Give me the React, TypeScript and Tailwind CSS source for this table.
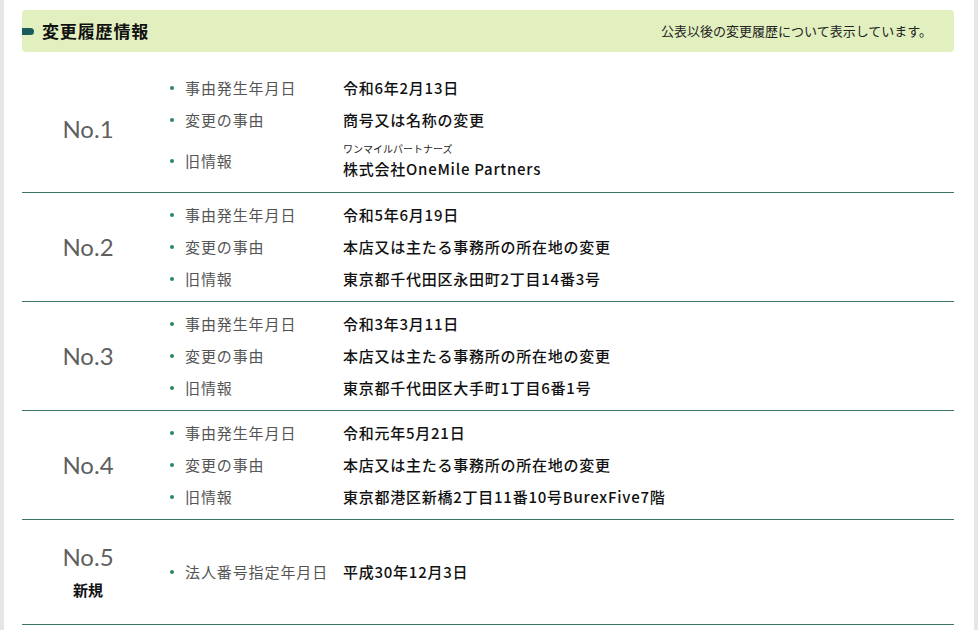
import React from "react";

type Item = {
  label: string;
  value: string;
  kana?: string;
};

type History = {
  no: number;
  isNew?: boolean;
  items: Item[];
};

const histories: History[] = [
  {
    no: 1,
    items: [
      { label: "事由発生年月日", value: "令和6年2月13日" },
      { label: "変更の事由", value: "商号又は名称の変更" },
      { label: "旧情報", value: "株式会社OneMile Partners", kana: "ワンマイルパートナーズ" },
    ],
  },
  {
    no: 2,
    items: [
      { label: "事由発生年月日", value: "令和5年6月19日" },
      { label: "変更の事由", value: "本店又は主たる事務所の所在地の変更" },
      { label: "旧情報", value: "東京都千代田区永田町2丁目14番3号" },
    ],
  },
  {
    no: 3,
    items: [
      { label: "事由発生年月日", value: "令和3年3月11日" },
      { label: "変更の事由", value: "本店又は主たる事務所の所在地の変更" },
      { label: "旧情報", value: "東京都千代田区大手町1丁目6番1号" },
    ],
  },
  {
    no: 4,
    items: [
      { label: "事由発生年月日", value: "令和元年5月21日" },
      { label: "変更の事由", value: "本店又は主たる事務所の所在地の変更" },
      { label: "旧情報", value: "東京都港区新橋2丁目11番10号BurexFive7階" },
    ],
  },
  {
    no: 5,
    isNew: true,
    items: [{ label: "法人番号指定年月日", value: "平成30年12月3日" }],
  },
];

const InfoRow = ({ item }: { item: Item }) => (
  <div className="flex items-center">
    <span className="w-[15px] flex items-center">
      <span className="block w-[4px] h-[4px] rounded-full bg-[#2a8a5c]" />
    </span>
    <span className="w-[158px] text-[15px] tracking-[0.06em] text-[#555]">{item.label}</span>
    {item.kana ? (
      <div className="pt-[4px] pb-[6px]">
        <div className="text-[10px] leading-[18px] text-[#222]">{item.kana}</div>
        <div className="text-[15px] leading-[22px] tracking-[0.05em] font-medium text-[#111]">
          {item.value}
        </div>
      </div>
    ) : (
      <span className="text-[15px] leading-[32px] tracking-[0.05em] font-medium text-[#111]">
        {item.value}
      </span>
    )}
  </div>
);

const HistoryBlock = ({ history }: { history: History }) => (
  <div
    className={`flex items-center border-b border-[#3a7565] ${
      history.isNew ? "h-[105px]" : "py-[6px]"
    }`}
  >
    <div className="w-[132px] flex flex-col items-center">
      <span className="text-[24px] leading-[30px] text-[#5f5f5f] font-['Lato','Noto_Sans',sans-serif]">
        No.{history.no}
      </span>
      {history.isNew && (
        <span className="mt-[7px] text-[15px] font-bold text-[#111]">新規</span>
      )}
    </div>
    <div className="pl-[16px] flex flex-col leading-[32px]">
      {history.items.map((item) => (
        <InfoRow key={item.label} item={item} />
      ))}
    </div>
  </div>
);

export default function App() {
  return (
    <div className="flex h-[630px] bg-white font-['Noto_Sans_CJK_JP',sans-serif] overflow-hidden">
      <div className="w-[4px] bg-[#e6e6e6]" />
      <main className="flex-1 pl-[18px] pr-[20px] pt-[10px]">
        {/* header */}
        <div className="h-[42px] flex items-center justify-between rounded-[4px] bg-[#e2f0c0] pr-[22px]">
          <div className="flex items-center">
            <span className="w-[12px] h-[7px] rounded-r-full bg-[#1a5c5c]" />
            <h2 className="ml-[8px] text-[17px] font-bold tracking-[0.05em] text-[#111]">
              変更履歴情報
            </h2>
          </div>
          <p className="text-[13px] text-[#222]">公表以後の変更履歴について表示しています。</p>
        </div>

        <div className="mt-[14px]">
          {histories.map((h) => (
            <HistoryBlock key={h.no} history={h} />
          ))}
        </div>
      </main>
      <div className="w-[4px] bg-[#e6e6e6]" />
    </div>
  );
}
